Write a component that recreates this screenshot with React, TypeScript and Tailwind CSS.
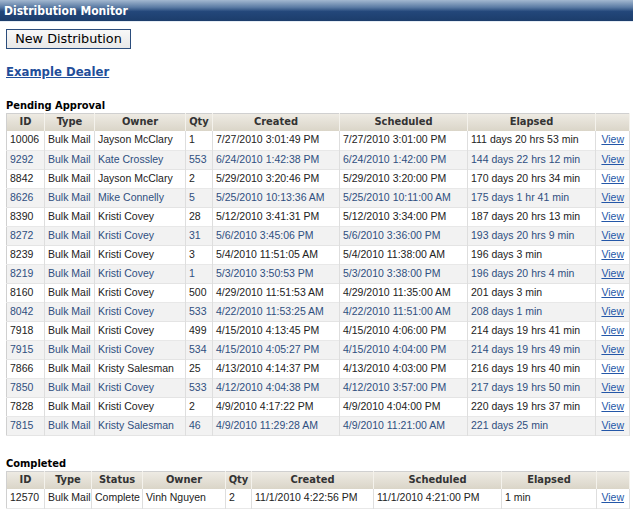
const pending = [
  ['10006', 'Bulk Mail', 'Jayson McClary', '1', '7/27/2010 3:01:49 PM', '7/27/2010 3:01:00 PM', '111 days 20 hrs 53 min'],
  ['9292', 'Bulk Mail', 'Kate Crossley', '553', '6/24/2010 1:42:38 PM', '6/24/2010 1:42:00 PM', '144 days 22 hrs 12 min'],
  ['8842', 'Bulk Mail', 'Jayson McClary', '2', '5/29/2010 3:20:46 PM', '5/29/2010 3:20:00 PM', '170 days 20 hrs 34 min'],
  ['8626', 'Bulk Mail', 'Mike Connelly', '5', '5/25/2010 10:13:36 AM', '5/25/2010 10:11:00 AM', '175 days 1 hr 41 min'],
  ['8390', 'Bulk Mail', 'Kristi Covey', '28', '5/12/2010 3:41:31 PM', '5/12/2010 3:34:00 PM', '187 days 20 hrs 13 min'],
  ['8272', 'Bulk Mail', 'Kristi Covey', '31', '5/6/2010 3:45:06 PM', '5/6/2010 3:36:00 PM', '193 days 20 hrs 9 min'],
  ['8239', 'Bulk Mail', 'Kristi Covey', '3', '5/4/2010 11:51:05 AM', '5/4/2010 11:38:00 AM', '196 days 3 min'],
  ['8219', 'Bulk Mail', 'Kristi Covey', '1', '5/3/2010 3:50:53 PM', '5/3/2010 3:38:00 PM', '196 days 20 hrs 4 min'],
  ['8160', 'Bulk Mail', 'Kristi Covey', '500', '4/29/2010 11:51:53 AM', '4/29/2010 11:35:00 AM', '201 days 3 min'],
  ['8042', 'Bulk Mail', 'Kristi Covey', '533', '4/22/2010 11:53:25 AM', '4/22/2010 11:51:00 AM', '208 days 1 min'],
  ['7918', 'Bulk Mail', 'Kristi Covey', '499', '4/15/2010 4:13:45 PM', '4/15/2010 4:06:00 PM', '214 days 19 hrs 41 min'],
  ['7915', 'Bulk Mail', 'Kristi Covey', '534', '4/15/2010 4:05:27 PM', '4/15/2010 4:04:00 PM', '214 days 19 hrs 49 min'],
  ['7866', 'Bulk Mail', 'Kristy Salesman', '25', '4/13/2010 4:14:37 PM', '4/13/2010 4:03:00 PM', '216 days 19 hrs 40 min'],
  ['7850', 'Bulk Mail', 'Kristi Covey', '533', '4/12/2010 4:04:38 PM', '4/12/2010 3:57:00 PM', '217 days 19 hrs 50 min'],
  ['7828', 'Bulk Mail', 'Kristi Covey', '2', '4/9/2010 4:17:22 PM', '4/9/2010 4:04:00 PM', '220 days 19 hrs 37 min'],
  ['7815', 'Bulk Mail', 'Kristy Salesman', '46', '4/9/2010 11:29:28 AM', '4/9/2010 11:21:00 AM', '221 days 25 min'],
];

const completed = [
  ['12570', 'Bulk Mail', 'Complete', 'Vinh Nguyen', '2', '11/1/2010 4:22:56 PM', '11/1/2010 4:21:00 PM', '1 min'],
];

const th =
  'h-[18px] p-0 text-center font-bold text-[11px] text-[#333] border-r border-[#f4f2ec] font-["DejaVu_Sans_Condensed","DejaVu_Sans",Tahoma,sans-serif]';
const td = 'h-[19px] px-[3px] py-0 whitespace-nowrap border-r border-[#dedede]';

function Table({ heads, widths, rows }: { heads: string[]; widths: number[]; rows: string[][] }) {
  return (
    <table className="table-fixed border-collapse w-[623px] border border-[#d0d0d0] border-r-[#9a9a9a] border-b-[#9a9a9a]">
      <colgroup>
        {widths.map((w, i) => (
          <col key={i} style={{ width: w }} />
        ))}
      </colgroup>
      <thead>
        <tr className="bg-gradient-to-b from-[#efece5] to-[#dad5c8]">
          {heads.map((h, i) => (
            <th key={i} className={th}>
              {h}
            </th>
          ))}
        </tr>
      </thead>
      <tbody className='text-[10.5px] font-["Liberation_Sans",Arial,sans-serif]'>
        {rows.map((r, i) => (
          <tr
            key={i}
            className={
              i % 2 === 0
                ? 'bg-white text-[#222] border-b border-[#e8e8e8]'
                : 'bg-[#f2f2f2] text-[#2f4f7f] border-b border-[#e4e4e4]'
            }
          >
            {r.map((c, j) => (
              <td key={j} className={td}>
                {c}
              </td>
            ))}
            <td className={td + ' text-right pr-[5px]'}>
              <a href="#" className="text-[#2457a8] underline">
                View
              </a>
            </td>
          </tr>
        ))}
      </tbody>
    </table>
  );
}

export default function App() {
  return (
    <div className="w-[633px] h-[510px] overflow-hidden bg-white font-['DejaVu_Sans',Verdana,sans-serif]">
      <div className="h-[22px] pl-[4px] flex items-center bg-[linear-gradient(to_bottom,#a3b8d0_0%,#5a7aa3_35%,#23477a_55%,#1c3d6b_100%)] border-b border-[#e6edf5]">
        <span className="text-white font-bold text-[12px] leading-none font-['DejaVu_Sans_Condensed','DejaVu_Sans',Tahoma,sans-serif]">
          Distribution Monitor
        </span>
      </div>

      <div className="px-[6px]">
        <button className="mt-[7px] h-[20px] w-[125px] border border-[#2b4d7c] bg-gradient-to-b from-[#f8f8f8] to-[#e8e8e8] text-[12.8px] text-black leading-none">
          New Distribution
        </button>

        <div className="mt-[9px]">
          <a href="#" className="text-[11.7px] font-bold text-[#1f4e9a] underline">
            Example Dealer
          </a>
        </div>

        <div className="mt-[16px] text-[11px] font-bold text-black leading-[14px] font-['DejaVu_Sans_Condensed','DejaVu_Sans',Tahoma,sans-serif]">
          Pending Approval
        </div>
        <Table
          heads={['ID', 'Type', 'Owner', 'Qty', 'Created', 'Scheduled', 'Elapsed', '']}
          widths={[38, 50, 91, 27, 127, 128, 128, 34]}
          rows={pending}
        />

        <div className="mt-[21px] text-[11px] font-bold text-black leading-[14px] font-['DejaVu_Sans_Condensed','DejaVu_Sans',Tahoma,sans-serif]">
          Completed
        </div>
        <Table
          heads={['ID', 'Type', 'Status', 'Owner', 'Qty', 'Created', 'Scheduled', 'Elapsed', '']}
          widths={[38, 47, 51, 83, 26, 122, 128, 95, 33]}
          rows={completed}
        />
      </div>
    </div>
  );
}
